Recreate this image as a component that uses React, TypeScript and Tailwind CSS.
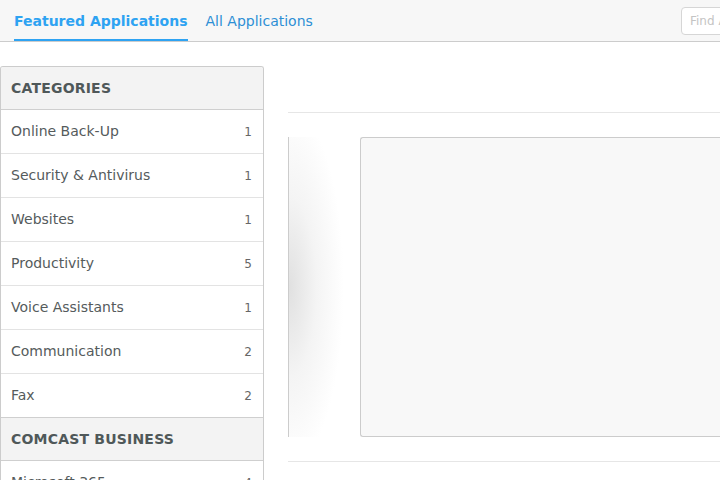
import React from 'react';

const categories = [
  { name: 'Online Back-Up', count: 1 },
  { name: 'Security & Antivirus', count: 1 },
  { name: 'Websites', count: 1 },
  { name: 'Productivity', count: 5 },
  { name: 'Voice Assistants', count: 1 },
  { name: 'Communication', count: 2 },
  { name: 'Fax', count: 2 },
];

const business = [{ name: 'Microsoft 365', count: 4 }];

const Row: React.FC<{ name: string; count: number }> = ({ name, count }) => (
  <div className="flex h-[44px] shrink-0 items-center justify-between border-b border-[#e3e3e3] bg-white pl-[10px] pr-[11px] text-[14px] text-[#555b5c]">
    <span>{name}</span>
    <span className="text-[12px] text-[#666]">{count}</span>
  </div>
);

const Header: React.FC<{ title: string }> = ({ title }) => (
  <div className="flex h-[43px] shrink-0 items-center border-b border-[#cfcfcf] bg-[#f3f3f3] px-[10px] text-[14px] font-bold tracking-[0.2px] text-[#4f5859]">
    {title}
  </div>
);

export default function App() {
  return (
    <div className="h-[480px] w-[720px] overflow-hidden bg-white font-['DejaVu_Sans',sans-serif]">
      <nav className="flex h-[42px] items-center overflow-hidden border-b border-[#cccccc] bg-[#f7f7f7]">
        <div className="flex h-full items-stretch gap-[18px] pl-[14px]">
          <a className="flex items-center border-b-2 border-[#2ea3f2] pt-[4px] text-[14px] font-bold text-[#2ea3f2]">
            Featured Applications
          </a>
          <a className="flex items-center pt-[2px] text-[14px] text-[#2d8fd5]">All Applications</a>
        </div>
        <input
          placeholder="Find Applications"
          className="ml-auto mr-[-161px] h-[28px] w-[200px] shrink-0 rounded-[4px] border border-[#d6d6d6] bg-white px-[8px] text-[12px] text-[#999] placeholder:text-[#c4c4c4]"
        />
      </nav>

      <div className="flex gap-[24px] pt-[24px]">
        <aside className="flex w-[264px] shrink-0 flex-col overflow-hidden rounded-t-[3px] border border-b-0 border-[#cccccc]">
          <Header title="CATEGORIES" />
          {categories.map((c) => (
            <Row key={c.name} {...c} />
          ))}
          <div className="-mt-px border-t border-[#cfcfcf]" />
          <Header title="COMCAST BUSINESS" />
          {business.map((c) => (
            <Row key={c.name} {...c} />
          ))}
        </aside>

        <main className="flex flex-1 flex-col">
          <div className="h-[47px] border-b border-[#e6e6e6]" />
          <div className="flex gap-[10px] pt-[24px] pb-[24px]">
            <div className="h-[300px] w-[62px] shrink-0 border-l border-[#cccccc] bg-[radial-gradient(ellipse_90%_60%_at_left,#e0e0e0,#f4f4f4_50%,#ffffff_100%)]" />
            <div className="h-[300px] flex-1 rounded-l-[3px] border border-r-0 border-[#cccccc] bg-[#f8f8f8]" />
          </div>
          <div className="border-t border-[#e6e6e6]" />
        </main>
      </div>
    </div>
  );
}
